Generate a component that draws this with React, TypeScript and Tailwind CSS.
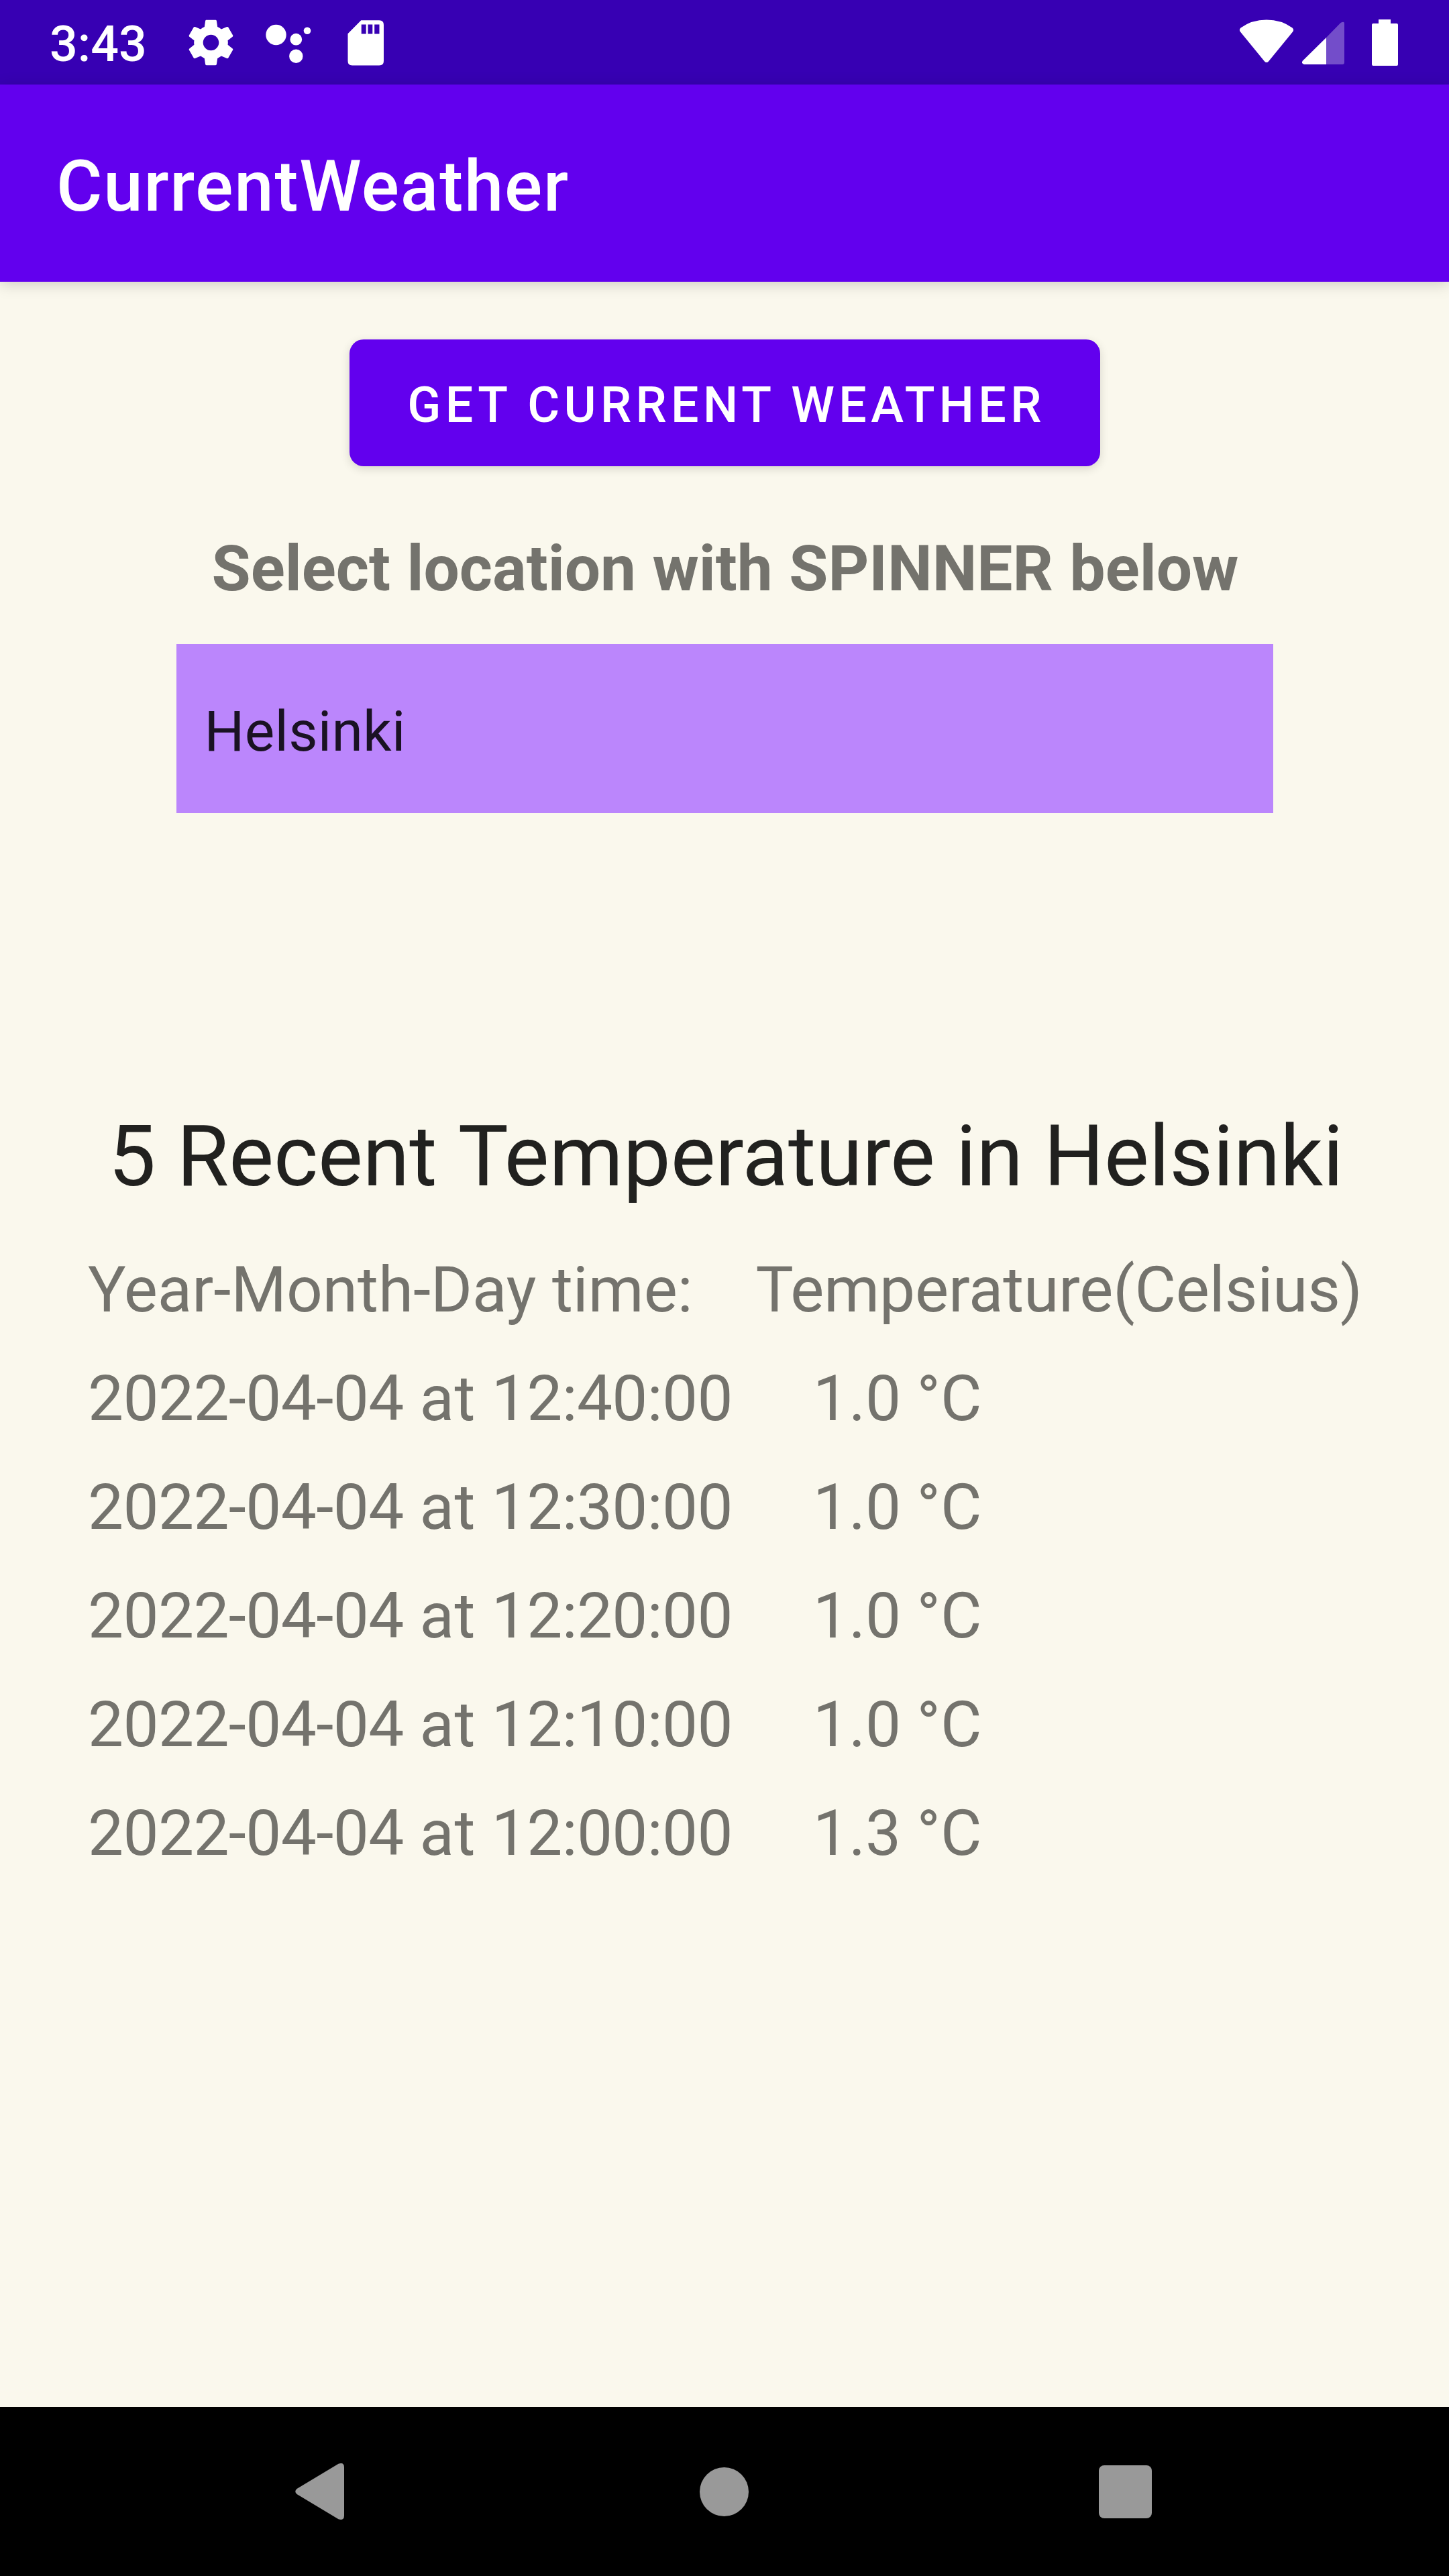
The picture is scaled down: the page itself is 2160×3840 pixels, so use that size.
const readings = [
  { date: "2022-04-04", time: "12:40:00", value: "1.0" },
  { date: "2022-04-04", time: "12:30:00", value: "1.0" },
  { date: "2022-04-04", time: "12:20:00", value: "1.0" },
  { date: "2022-04-04", time: "12:10:00", value: "1.0" },
  { date: "2022-04-04", time: "12:00:00", value: "1.3" },
];

function StatusBar() {
  return (
    <div className="flex h-[126px] items-center justify-between bg-[#3700b3] text-white">
      <div className="flex items-center">
        <span className="ml-[74px] w-[200px] pt-[6px] text-[73.5px] leading-[86px] font-medium">3:43</span>
        <svg className="h-[82px] w-[81px]" viewBox="0 -0.3 24 24.3" fill="currentColor">
          <path d="M19.43 12.98c.04-.32.07-.64.07-.98s-.03-.66-.07-.98l2.11-1.65c.19-.15.24-.42.12-.64l-2-3.46c-.12-.22-.39-.3-.61-.22l-2.49 1c-.52-.4-1.08-.73-1.69-.98l-.38-2.65A.488.488 0 0 0 14 2h-4c-.25 0-.46.18-.49.42l-.38 2.65c-.61.25-1.17.59-1.69.98l-2.49-1c-.23-.09-.49 0-.61.22l-2 3.46c-.13.22-.07.49.12.64l2.11 1.65c-.04.32-.07.65-.07.98s.03.66.07.98l-2.11 1.65c-.19.15-.24.42-.12.64l2 3.46c.12.22.39.3.61.22l2.49-1c.52.4 1.08.73 1.69.98l.38 2.65c.03.24.24.42.49.42h4c.25 0 .46-.18.49-.42l.38-2.65c.61-.25 1.17-.59 1.69-.98l2.49 1c.23.09.49 0 .61-.22l2-3.46c.12-.22.07-.49-.12-.64l-2.11-1.65zM12 15.5c-1.93 0-3.5-1.57-3.5-3.5s1.57-3.5 3.5-3.5 3.5 1.57 3.5 3.5-1.57 3.5-3.5 3.5z" />
        </svg>
        <svg className="ml-[41px] h-[80px] w-[68px]" viewBox="396 23 68 80" fill="currentColor">
          <circle cx="411.500" cy="52" r="15.200" />
          <circle cx="441.300" cy="58.700" r="8.900" />
          <circle cx="458" cy="45.700" r="5.300" />
          <circle cx="441.300" cy="83.700" r="10.200" />
        </svg>
        <svg className="ml-[54px] h-[70px] w-[55px]" viewBox="518 28 55 70" fill="currentColor">
          <path fillRule="evenodd" d="M538.300 30.300H565.300Q572 30.300 572 37V91Q572 97.500 565.300 97.500H525Q518.500 97.500 518.500 91V50.300ZM538.700 36.500V50.500H545.700V36.500ZM548.500 36.500V50.500H555.300V36.500ZM558.200 36.500V50.500H565.500V36.500Z" />
        </svg>
      </div>
      <svg className="mr-[70px] h-[126px] w-[250px]" viewBox="1840 0 250 126" fill="currentColor">
        <path d="M1849.500 41.500Q1866 29.500 1888 29.500T1926.500 41.500Q1929.500 44.500 1927 47.500L1891 91.500Q1888 94.500 1885 91.500L1849 47.500Q1846.500 44.500 1849.500 41.500Z" />
        <path fillOpacity=".3" d="M1977 56 1998.500 34Q2004 31 2004 35V93Q2004 96 2001 96H1977Z" />
        <path d="M1977 56V96H1944Q1939 94 1942 90.500Z" />
        <path d="M2055 29H2073V35H2082Q2084 35 2084 37V96Q2084 98 2082 98H2047Q2045 98 2045 96V37Q2045 35 2047 35H2055Z" />
      </svg>
    </div>
  );
}

function NavigationBar() {
  return (
    <div className="flex h-[252px] items-center bg-black pl-[440px] text-[#999999]">
      <svg className="h-[84px] w-[73px]" viewBox="0 0 73 84" fill="currentColor">
        <path d="M2.500 38 64.500 .8Q73-2 73 6V78Q73 86 64.500 83.200L2.500 46Q-2 42 2.500 38Z" />
      </svg>
      <div className="ml-[530px] size-[73px] rounded-full bg-[#999999]" />
      <div className="ml-[522px] size-[79px] rounded-[8px] bg-[#999999]" />
    </div>
  );
}

export default function App() {
  return (
    <div className="flex h-[3840px] w-[2160px] flex-col overflow-hidden bg-[#faf8ed] font-['Roboto',sans-serif]">
      <StatusBar />
      <header className="z-10 flex h-[294px] items-center bg-[#6200ee] pt-[10px] pl-[84px] shadow-[0_4px_21px_rgba(0,0,0,0.17)]">
        <h1 className="text-[105px] leading-[123px] font-medium tracking-[1.76px] text-white">CurrentWeather</h1>
      </header>
      <main className="flex flex-1 flex-col items-center">
        <button className="mt-[86px] h-[189px] w-[1119px] rounded-[21px] bg-[#6200ee] pt-[7px] pl-[6px] text-[73.5px] font-medium tracking-[6.32px] whitespace-nowrap text-white shadow-[0_4px_14px_rgba(0,0,0,0.14)]">
          GET CURRENT WEATHER
        </button>
        <p className="mt-[98px] pl-[2px] text-[94.5px] leading-[110px] font-bold whitespace-nowrap text-[#74736d] [word-spacing:1px]">
          Select location with SPINNER below
        </p>
        <div className="mt-[57px] flex h-[252px] w-[1635px] items-center bg-[#bb86fc] pt-[9px] pl-[42px] text-[84px] tracking-[0.25px] text-[#1a1223]">
          Helsinki
        </div>
        <h2 className="mt-[437px] pl-[4px] text-[126px] leading-[150px] whitespace-pre text-[#21211f]">
          {"5 Recent "}
          <span className="inline-block tracking-[-0.08px]">Temperature in Helsinki</span>
        </h2>
        <div className="mt-[43px] w-full pl-[131px] text-[94.5px] leading-[162px] whitespace-pre text-[#74736d]">
          <p>
            {"Year-Month-Day time:    "}
            <span className="inline-block tracking-[-0.1px]">Temperature(Celsius)</span>
          </p>
          {readings.map((r) => (
            <p key={r.time}>
              <span className="tracking-[-0.65px]">{r.date}</span>
              <span className="tracking-[0.5px]">{" at "}</span>
              <span className="tracking-[-0.68px]">{r.time}</span>
              <span className="tracking-[0.6px]">{"     "}</span>
              <span>{r.value + " °C"}</span>
            </p>
          ))}
        </div>
      </main>
      <NavigationBar />
    </div>
  );
}
